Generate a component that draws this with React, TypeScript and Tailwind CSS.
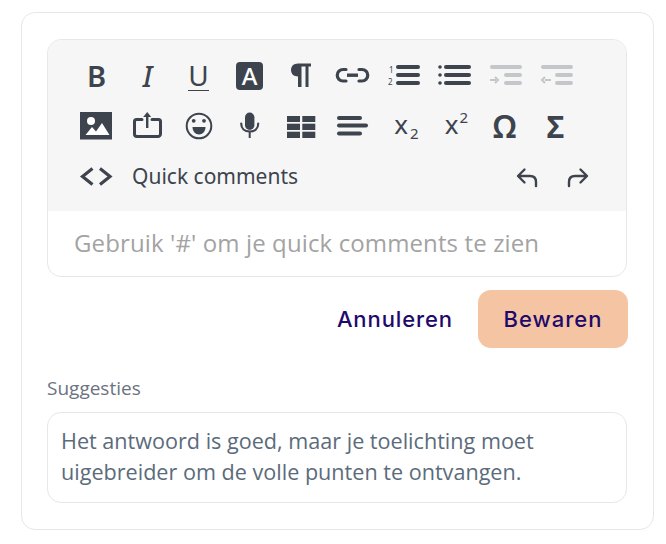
import type { ReactNode } from "react";

const DARK = "#3d444d";
const MUTED = "#c4c6c9";

// svg cell, viewBox takes the left/top of the cell so shapes can be read off the reference
function Svg({ x, y, children }: { x: number; y: number; children: ReactNode }) {
  return (
    <svg className="w-[51px] h-[50px] shrink-0" viewBox={`${x} ${y} 51 50`}>
      {children}
    </svg>
  );
}

function Cell({ children, className }: { children: ReactNode; className?: string }) {
  return (
    <span className={`w-[51px] h-[50px] shrink-0 flex items-center justify-center text-[#3d444d] ${className ?? ""}`}>
      {children}
    </span>
  );
}

function Bar({ x, y, w, h = 4, color = DARK }: { x: number; y: number; w: number; h?: number; color?: string }) {
  return <rect x={x} y={y - h / 2} width={w} height={h} rx={h / 2} fill={color} />;
}

function FirstRow() {
  return (
    <div className="flex">
      <Cell className="font-['Noto_Sans'] font-semibold text-[29px]">B</Cell>
      <Cell className="font-['Noto_Sans'] font-medium italic text-[28px]">I</Cell>
      <Cell className="font-['Noto_Sans'] text-[28px]">
        <span className="border-b-[1.5px] border-[#3d444d] leading-[29px]">U</span>
      </Cell>
      <Cell>
        <span className="w-[27px] h-[28px] rounded-[4px] bg-[#3d444d] text-white flex items-center justify-center font-['Noto_Sans'] font-medium text-[24px]">A</span>
      </Cell>
      <Svg x={275} y={51}>
        <path d="M311 63.500H298c-4.300 0-7 2.800-7 6.500s2.700 6.500 7 6.500V87h3.500V66.500h4V87h3V66.500H311z" fill={DARK} />
      </Svg>
      <Svg x={326} y={51}>
        <g fill="none" stroke={DARK} strokeWidth="3.200" strokeLinecap="round">
          <path d="M346 69.500h-3a5.500 5.500 0 0 0 0 11.500h3" />
          <path d="M359 69.500h3a5.500 5.500 0 0 1 0 11.500h-3" />
        </g>
        <rect x="347" y="73.500" width="11" height="3.400" fill={DARK} />
      </Svg>
      <Svg x={377} y={51}>
        <text x="389" y="73" fontSize="8" fill={DARK} fontFamily="Noto Sans">1</text>
        <text x="388" y="85" fontSize="8" fill={DARK} fontFamily="Noto Sans">2</text>
        <Bar x={396} y={67} w={24} />
        <Bar x={396} y={75} w={24} />
        <Bar x={396} y={83} w={24} />
      </Svg>
      <Svg x={428} y={51}>
        <circle cx="440" cy="67" r="1.800" fill={DARK} />
        <circle cx="440" cy="75" r="1.800" fill={DARK} />
        <circle cx="440" cy="83" r="1.800" fill={DARK} />
        <Bar x={444} y={67} w={27} />
        <Bar x={444} y={75} w={27} />
        <Bar x={444} y={83} w={27} />
      </Svg>
      <Svg x={479} y={51}>
        <Bar x={490} y={67} w={32} color={MUTED} />
        <Bar x={504} y={75} w={18} color={MUTED} />
        <Bar x={504} y={83} w={18} color={MUTED} />
        <path d="M490 80h6M495 77l3 3-3 3" fill="none" stroke={MUTED} strokeWidth="2" />
      </Svg>
      <Svg x={530} y={51}>
        <Bar x={541} y={67} w={32} color={MUTED} />
        <Bar x={555} y={75} w={18} color={MUTED} />
        <Bar x={555} y={83} w={18} color={MUTED} />
        <path d="M551 80h-6M545 77l-3 3 3 3" fill="none" stroke={MUTED} strokeWidth="2" />
      </Svg>
    </div>
  );
}

function SecondRow() {
  return (
    <div className="flex">
      <Svg x={71} y={101}>
        <rect x="80" y="112" width="32" height="27.500" fill={DARK} />
        <circle cx="91" cy="121" r="4" fill="white" />
        <path d="M85.500 135l6.500-8 4 4.500 6-8.500 7.500 12z" fill="white" />
      </Svg>
      <Svg x={122} y={101}>
        <path d="M142 119.500h-5.500a2 2 0 0 0-2 2v12.500a2.500 2.500 0 0 0 2.500 2.500h21a2.500 2.500 0 0 0 2.500-2.500v-12.500a2 2 0 0 0-2-2H152" fill="none" stroke={DARK} strokeWidth="3" strokeLinecap="round" />
        <rect x="146" y="116" width="2.400" height="12" fill={DARK} />
        <path d="M147.200 112l4 5h-8z" fill={DARK} />
      </Svg>
      <Svg x={173} y={101}>
        <circle cx="199" cy="126" r="12.300" fill="none" stroke={DARK} strokeWidth="2" />
        <circle cx="193.700" cy="120.800" r="1.900" fill={DARK} />
        <circle cx="204" cy="120.800" r="1.900" fill={DARK} />
        <path d="M192.500 127h13c0 4.500-3 7.500-6.500 7.500s-6.500-3-6.500-7.500z" fill={DARK} />
      </Svg>
      <Svg x={224} y={101}>
        <rect x="245" y="112.500" width="9.400" height="17.500" rx="4.700" fill={DARK} />
        <path d="M241.200 123.500c0 5 3.500 8 8.500 8s8.500-3 8.500-8" fill="none" stroke={DARK} strokeWidth="2.200" strokeLinecap="round" />
        <rect x="248.700" y="131" width="2" height="7" fill={DARK} />
      </Svg>
      <Svg x={275} y={101}>
        <rect x="287" y="116" width="13" height="6" fill={DARK} />
        <rect x="302.300" y="116" width="13" height="6" fill={DARK} />
        <rect x="287" y="123.700" width="13" height="6.300" fill={DARK} />
        <rect x="302.300" y="123.700" width="13" height="6.300" fill={DARK} />
        <rect x="287" y="131.700" width="13" height="6.300" fill={DARK} />
        <rect x="302.300" y="131.700" width="13" height="6.300" fill={DARK} />
      </Svg>
      <Svg x={326} y={101}>
        <Bar x={337} y={118} w={25} />
        <Bar x={337} y={125.500} w={31} />
        <Bar x={337} y={133.500} w={25} />
      </Svg>
      <Cell className="font-['Noto_Sans'] text-[26px]">
        <span className="translate-x-[4px] -translate-y-[2px]">x<sub className="bottom-0 text-[15px] align-[-5px] ml-[2px]">2</sub></span>
      </Cell>
      <Cell className="font-['Noto_Sans'] text-[26px]">
        <span className="translate-x-[3px] -translate-y-[2px]">x<sup className="top-0 text-[15px] align-[11px] ml-[1px]">2</sup></span>
      </Cell>
      <Cell className="font-['Noto_Sans'] font-semibold text-[32px]">Ω</Cell>
      <Cell className="font-['Noto_Sans'] font-bold text-[30px]">Σ</Cell>
    </div>
  );
}

function ThirdRow() {
  return (
    <div className="flex items-center">
      <Svg x={71} y={151}>
        <g fill="none" stroke={DARK} strokeWidth="3.200">
          <path d="M92.500 168.500l-10 8 10 8" />
          <path d="M100 168.500l10 8-10 8" />
        </g>
      </Svg>
      <span className="ml-[10px] mt-[2px] font-['Noto_Sans'] text-[21px] text-[#3d444d]">Quick comments</span>
      <div className="ml-auto flex mr-[23px]">
        <Svg x={501} y={151}>
          <path d="M536 186v-4c0-4-2.500-6-6-6h-11.500M524.500 169.500l-6.500 6.500 6.500 6.500" fill="none" stroke={DARK} strokeWidth="2.400" strokeLinecap="round" strokeLinejoin="round" />
        </Svg>
        <Svg x={552} y={151}>
          <path d="M569 186v-4c0-4 2.500-6 6-6h11.500M580.500 169.500l6.500 6.500-6.500 6.500" fill="none" stroke={DARK} strokeWidth="2.400" strokeLinecap="round" strokeLinejoin="round" />
        </Svg>
      </div>
    </div>
  );
}

export default function App() {
  return (
    <div className="min-h-screen bg-white pt-3 pl-[21px] pr-[12px]">
      <div className="h-[518px] rounded-[14px] border border-[#e5e7eb] px-[25px] pt-[26px]">
        {/* Editor */}
        <div className="w-[580px] rounded-[14px] border border-[#e5e7eb] overflow-hidden">
          <div className="bg-[#f6f6f7] pl-[23px] pt-[11px] pb-[10px]">
            <FirstRow />
            <SecondRow />
            <ThirdRow />
          </div>
          <div className="h-[65px] flex items-center pl-[26px] pb-[2px] font-['Open_Sans'] text-[24px] tracking-[0.12px] text-[#a3a3a3]">
            Gebruik '#' om je quick comments te zien
          </div>
        </div>

        {/* Actions */}
        <div className="mt-[13px] w-[581px] flex items-center justify-end">
          <button className="mr-[25px] font-['Inter'] font-medium text-[22px] tracking-[0.9px] text-[#1f0a6b]">Annuleren</button>
          <button className="w-[150px] h-[58px] rounded-[13px] bg-[#f5c4a3] font-['Inter'] font-medium text-[22px] tracking-[1px] text-[#1f0a6b]">Bewaren</button>
        </div>

        {/* Suggestions */}
        <p className="mt-[28px] font-['Open_Sans'] text-[19px] leading-[24px] text-[#6b7280]">Suggesties</p>
        <div className="mt-[12px] w-[580px] h-[91px] rounded-[14px] border border-[#e5e7eb] px-[13px] pt-[12px] font-['Open_Sans'] text-[21.6px] leading-[31px] text-[#5b6b7b]">
          Het antwoord is goed, maar je toelichting moet
          <br />
          uigebreider om de volle punten te ontvangen.
        </div>
      </div>
    </div>
  );
}
